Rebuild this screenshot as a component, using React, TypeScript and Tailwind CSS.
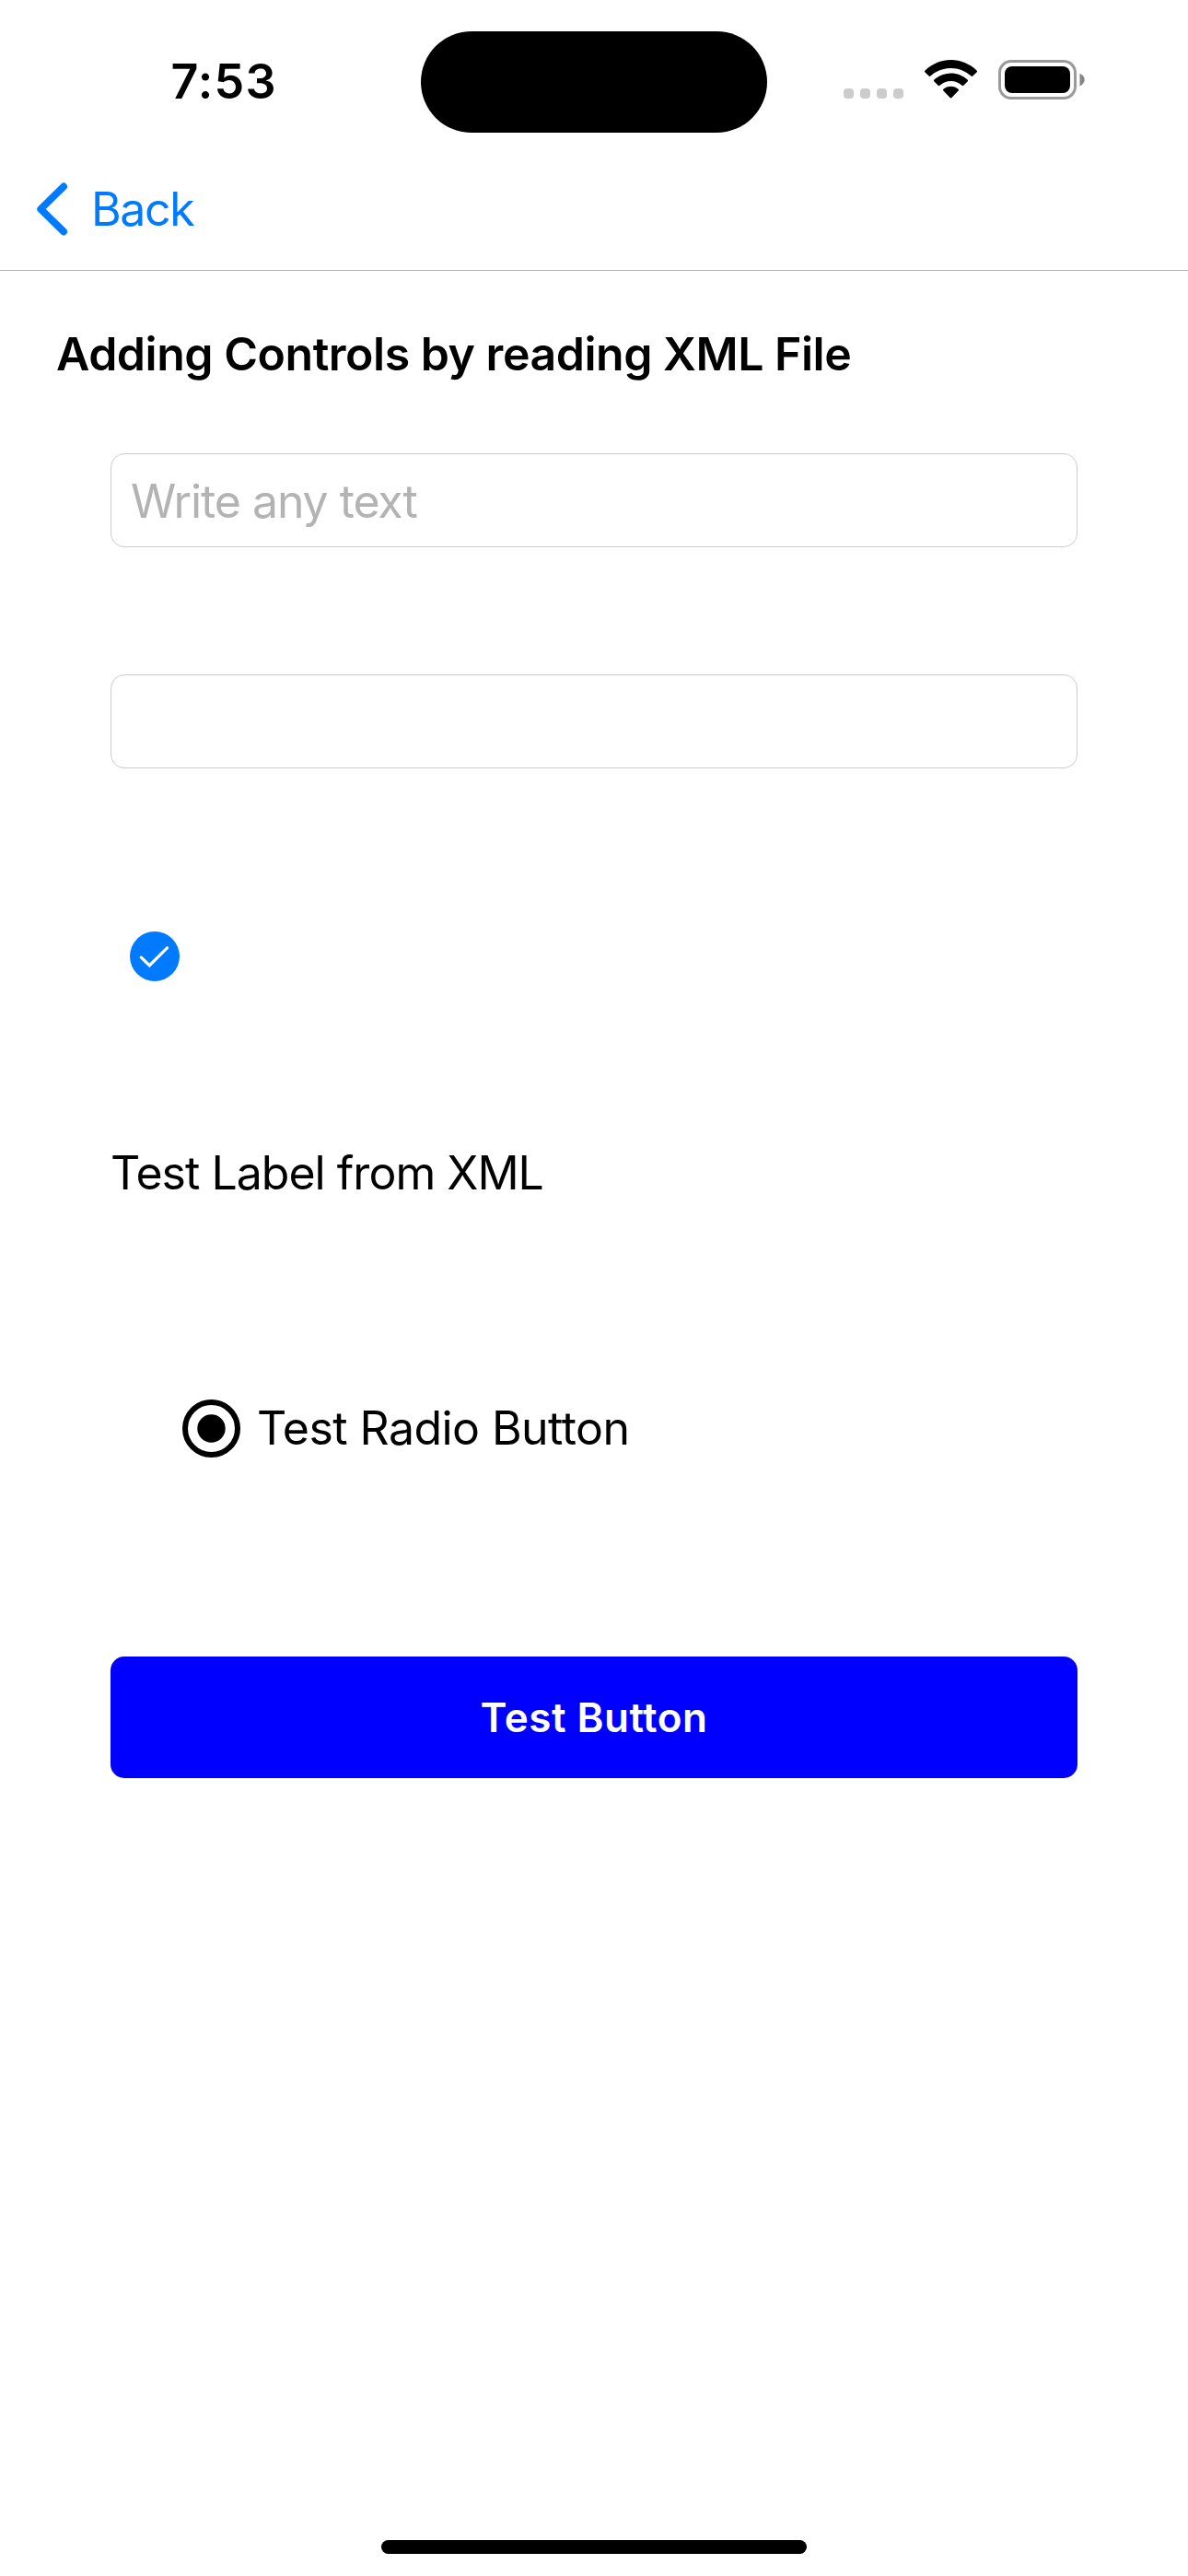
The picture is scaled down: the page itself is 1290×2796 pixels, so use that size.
function StatusBar() {
  return (
    <div className="flex h-[177px] items-start">
      <div className="w-[457px] pl-[185.500px] pt-[59px] text-[52px] leading-[60px] font-semibold tracking-[1.15px]">7:53</div>
      <div className="mt-[33.500px] h-[110.500px] w-[376px] shrink-0 rounded-full bg-black" />
      <div className="ml-[83px] mt-[96px] flex gap-[7px]">
        <span className="size-[11px] rounded-[4px] bg-[#cccccc]" />
        <span className="size-[11px] rounded-[4px] bg-[#cccccc]" />
        <span className="size-[11px] rounded-[4px] bg-[#cccccc]" />
        <span className="size-[11px] rounded-[4px] bg-[#cccccc]" />
      </div>
      <svg className="mt-[65px] ml-[23px] h-[42px] w-[57px] shrink-0" viewBox="0 0 57 42" fill="#000">
        <path d="M28.5 0C39 0 49 4.200 56.500 11.400Q57.500 12.400 56.500 13.400L52.300 17.600Q51.500 18.400 50.600 17.600C44.600 12 36.800 8.900 28.500 8.900S12.400 12 6.400 17.600Q5.500 18.400 4.700 17.600L.5 13.400Q-.5 12.400 .5 11.400C8 4.200 18 0 28.500 0Z" />
        <path d="M28.500 14.400C35.300 14.400 41.700 17 46.600 21.500Q47.600 22.500 46.600 23.500L42.300 27.700Q41.500 28.500 40.600 27.800C37.200 24.800 33 23 28.500 23S19.800 24.800 16.400 27.800Q15.500 28.500 14.700 27.700L10.400 23.500Q9.400 22.500 10.400 21.500C15.300 17 21.700 14.400 28.500 14.400Z" />
        <path d="M28.500 28.700C31.600 28.700 34.400 29.800 36.600 31.700Q37.600 32.600 36.600 33.600L29.400 41Q28.500 41.900 27.600 41L20.400 33.600Q19.400 32.600 20.400 31.700C22.600 29.800 25.400 28.700 28.500 28.700Z" />
      </svg>
      <svg className="mt-[65px] ml-[23px] h-[43px] w-[95px] shrink-0" viewBox="0 0 95 43">
        <rect x="1.500" y="1.500" width="82" height="40" rx="12.500" fill="none" stroke="#9a9a9a" strokeWidth="3" />
        <rect x="7" y="7" width="71" height="29" rx="8" fill="#000" />
        <path d="M88.500 14.800C91.500 16 93.700 18.600 93.700 21.600S91.500 27.200 88.500 28.400Z" fill="#858585" />
      </svg>
    </div>
  );
}

function NavBar() {
  return (
    <nav className="flex h-[117px] items-start border-b border-[#b2b2b2] pt-[20px] pl-[40px] text-[#007aff]">
      <svg className="mt-[1px] h-[58px] w-[34px] shrink-0" viewBox="0 0 34 58" fill="none" stroke="currentColor" strokeWidth="7.800" strokeLinecap="round" strokeLinejoin="round">
        <path d="M29.100 4.500 4.200 29l24.900 24.400" />
      </svg>
      <span className="ml-[25px] text-[50px] leading-[60px] tracking-[-1.37px]">Back</span>
    </nav>
  );
}

export default function App() {
  return (
    <div className="flex h-[2796px] w-[1290px] flex-col overflow-hidden bg-white font-[Inter,'Liberation_Sans',sans-serif] text-black">
      <StatusBar />
      <NavBar />
      <main className="flex flex-col px-[120px] pt-[60px]">
        <h1 className="-ml-[59px] text-[50px] leading-[60px] font-semibold tracking-[-0.48px] whitespace-nowrap">Adding Controls by reading XML File</h1>
        <input
          type="text"
          placeholder="Write any text"
          className="mt-[78px] h-[102px] rounded-[15px] border border-[#cccccc] bg-white pt-[2px] pl-[21px] text-[50px] tracking-[-1.08px] outline-none placeholder:text-[#b3b3b3]"
        />
        <input type="text" className="mt-[138px] h-[102px] rounded-[15px] border border-[#cccccc] bg-white px-[22px] text-[50px] outline-none" />
        <svg className="mt-[177px] ml-[21px] size-[54px]" viewBox="0 0 54 54">
          <circle cx="27" cy="27" r="27" fill="#007aff" />
          <path d="M12.300 28.200 21.300 37 40.500 17.800" fill="none" stroke="#fff" strokeWidth="3.200" strokeLinecap="round" strokeLinejoin="miter" />
        </svg>
        <p className="mt-[178px] text-[50px] leading-[60px] tracking-[-0.98px]">Test Label from XML</p>
        <label className="mt-[216px] ml-[78px] flex items-start">
          <svg className="size-[63px] shrink-0" viewBox="0 0 63 63">
            <circle cx="31.500" cy="31.500" r="28.500" fill="none" stroke="#000" strokeWidth="6" />
            <circle cx="31.500" cy="31.500" r="15.200" fill="#000" />
          </svg>
          <span className="mt-[1px] ml-[18px] text-[50px] leading-[60px] tracking-[-0.56px]">Test Radio Button</span>
        </label>
        <button className="mt-[216px] h-[132px] rounded-[15px] bg-[#0000ff] text-[44px] font-semibold tracking-[0.5px] text-white">Test Button</button>
      </main>
      <div className="mx-auto mt-auto mb-[24px] h-[15px] w-[462px] shrink-0 rounded-full bg-black" />
    </div>
  );
}
